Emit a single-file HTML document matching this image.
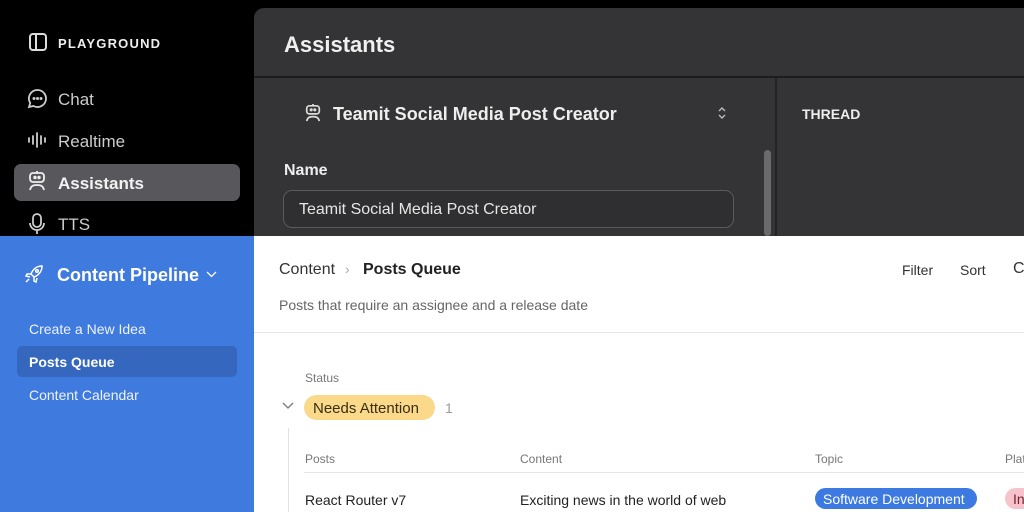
<!DOCTYPE html>
<html><head><meta charset="utf-8"><style>
*{margin:0;padding:0;box-sizing:border-box}
body{width:1024px;height:512px;overflow:hidden;position:relative;font-family:"Liberation Sans",sans-serif;background:#000}
.a{position:absolute;white-space:nowrap}
</style></head><body>
<div class="a" style="left:0;top:0;width:1024px;height:236px;background:#000"></div>
<svg class="a" style="left:28px;top:32px" width="20" height="20" viewBox="0 0 20 20" fill="none" stroke="#ddd" stroke-width="2"><rect x="2" y="2" width="16" height="16" rx="3"/><line x1="8" y1="2" x2="8" y2="18"/></svg>
<div class="a" style="left:58px;top:36px;color:#eee;font-size:13px;font-weight:bold;letter-spacing:1.2px">PLAYGROUND</div>
<svg class="a" style="left:27px;top:88px" width="21" height="21" viewBox="0 0 21 21" fill="none" stroke="#ccc" stroke-width="1.8"><path d="M10.5 2a8.5 8.5 0 1 1-4 16L2 19l1.2-4A8.5 8.5 0 0 1 10.5 2z"/><circle cx="7" cy="10.5" r=".6" fill="#ccc"/><circle cx="10.5" cy="10.5" r=".6" fill="#ccc"/><circle cx="14" cy="10.5" r=".6" fill="#ccc"/></svg>
<div class="a" style="left:58px;top:90px;color:#ccc;font-size:17px">Chat</div>
<svg class="a" style="left:27px;top:132px" width="20" height="16" viewBox="0 0 20 16" stroke="#ccc" stroke-width="1.8" stroke-linecap="round"><line x1="2" y1="6" x2="2" y2="10"/><line x1="6" y1="4" x2="6" y2="12"/><line x1="10" y1="1" x2="10" y2="15"/><line x1="14" y1="4" x2="14" y2="12"/><line x1="18" y1="6" x2="18" y2="10"/></svg>
<div class="a" style="left:58px;top:132px;color:#ccc;font-size:17px">Realtime</div>
<div class="a" style="left:14px;top:164px;width:226px;height:37px;background:#58585c;border-radius:7px"></div>
<svg class="a" style="left:27px;top:170px" width="20" height="22" viewBox="0 0 20 22" fill="none" stroke="#eee" stroke-width="1.8"><rect x="3" y="3" width="14" height="9" rx="3"/><circle cx="8" cy="7.5" r=".8" fill="#eee"/><circle cx="12" cy="7.5" r=".8" fill="#eee"/><path d="M10 1v2M3 20c1-4 3-5 7-5s6 1 7 5"/></svg>
<div class="a" style="left:58px;top:174px;color:#f2f2f2;font-size:17px;font-weight:bold">Assistants</div>
<svg class="a" style="left:28px;top:212px" width="18" height="24" viewBox="0 0 18 24" fill="none" stroke="#ccc" stroke-width="1.8"><rect x="5" y="2" width="8" height="13" rx="4"/><path d="M2 11a7 7 0 0 0 14 0M9 18v4"/></svg>
<div class="a" style="left:58px;top:215px;color:#ccc;font-size:17px">TTS</div>

<div class="a" style="left:254px;top:8px;width:770px;height:228px;background:#343437;border-top-left-radius:10px"></div>
<div class="a" style="left:284px;top:32px;color:#f0f0f0;font-size:22px;font-weight:bold">Assistants</div>
<div class="a" style="left:254px;top:76px;width:770px;height:2px;background:#1c1c1e"></div>
<div class="a" style="left:775px;top:78px;width:2px;height:158px;background:#232325"></div>
<svg class="a" style="left:304px;top:102px" width="18" height="22" viewBox="0 0 20 22" fill="none" stroke="#ddd" stroke-width="1.9"><rect x="3" y="3" width="14" height="9" rx="3"/><circle cx="8" cy="7.5" r=".8" fill="#ddd"/><circle cx="12" cy="7.5" r=".8" fill="#ddd"/><path d="M10 1v2M3 20c1-4 3-5 7-5s6 1 7 5"/></svg>
<div class="a" style="left:333px;top:104px;color:#eee;font-size:18px;font-weight:bold">Teamit Social Media Post Creator</div>
<svg class="a" style="left:717px;top:106px" width="10" height="14" viewBox="0 0 10 14" fill="none" stroke="#bbb" stroke-width="1.4"><path d="M2 5l3-3 3 3M2 9l3 3 3-3"/></svg>
<div class="a" style="left:802px;top:106px;color:#eee;font-size:14px;font-weight:bold">THREAD</div>
<div class="a" style="left:284px;top:162px;color:#eee;font-size:16px;font-weight:bold">Name</div>
<div class="a" style="left:283px;top:190px;width:451px;height:38px;border:1px solid #5a5a5e;border-radius:9px;background:#2f2f32"></div>
<div class="a" style="left:299px;top:201px;color:#e6e6e6;font-size:16px">Teamit Social Media Post Creator</div>
<div class="a" style="left:764px;top:150px;width:7px;height:86px;background:#6a6a6c;border-radius:4px"></div>

<div class="a" style="left:0;top:236px;width:254px;height:276px;background:#3f7ade"></div>
<div class="a" style="left:254px;top:236px;width:770px;height:276px;background:#fff"></div>
<svg class="a" style="left:24px;top:264px" width="20" height="20" viewBox="0 0 20 20" fill="none" stroke="#fff" stroke-width="1.5"><path d="M18 2c-5 0-9 3-11 8l3 3c5-2 8-6 8-11zM7 10l-4 0-1 2 4 1M10 13v4l2 1 1-4M5 15l-3 3"/><circle cx="13" cy="7" r="1.3"/></svg>
<div class="a" style="left:57px;top:265px;color:#fff;font-size:18px;font-weight:bold">Content Pipeline</div>
<svg class="a" style="left:206px;top:271px" width="11" height="7" viewBox="0 0 11 7" fill="none" stroke="#fff" stroke-width="1.3"><path d="M1 1l4.5 4.5L10 1"/></svg>
<div class="a" style="left:29px;top:321px;color:#eef3fc;font-size:14px">Create a New Idea</div>
<div class="a" style="left:17px;top:346px;width:220px;height:31px;background:#3667bf;border-radius:5px"></div>
<div class="a" style="left:29px;top:354px;color:#fff;font-size:14px;font-weight:bold">Posts Queue</div>
<div class="a" style="left:29px;top:387px;color:#eef3fc;font-size:14px">Content Calendar</div>

<div class="a" style="left:279px;top:261px;color:#333;font-size:16px">Content</div>
<div class="a" style="left:345px;top:261px;color:#aaa;font-size:14px">›</div>
<div class="a" style="left:363px;top:261px;color:#222;font-size:16px;font-weight:bold">Posts Queue</div>
<div class="a" style="left:902px;top:262px;color:#333;font-size:14px">Filter</div>
<div class="a" style="left:960px;top:262px;color:#333;font-size:14px">Sort</div>
<div class="a" style="left:1013px;top:260px;color:#333;font-size:16px">C</div>
<div class="a" style="left:279px;top:297px;color:#666;font-size:14px">Posts that require an assignee and a release date</div>
<div class="a" style="left:254px;top:332px;width:770px;height:1px;background:#e6e6e6"></div>
<div class="a" style="left:305px;top:371px;color:#777;font-size:12px">Status</div>
<svg class="a" style="left:282px;top:402px" width="12" height="8" viewBox="0 0 12 8" fill="none" stroke="#777" stroke-width="1.3"><path d="M1 1l5 5 5-5"/></svg>
<div class="a" style="left:304px;top:395px;width:131px;height:25px;background:#fbd98a;border-radius:13px"></div>
<div class="a" style="left:313px;top:400px;color:#3a2e10;font-size:15px">Needs Attention</div>
<div class="a" style="left:445px;top:400px;color:#999;font-size:14px">1</div>
<div class="a" style="left:288px;top:428px;width:1px;height:84px;background:#e2e2e2"></div>
<div class="a" style="left:305px;top:452px;color:#777;font-size:12px">Posts</div>
<div class="a" style="left:520px;top:452px;color:#777;font-size:12px">Content</div>
<div class="a" style="left:815px;top:452px;color:#777;font-size:12px">Topic</div>
<div class="a" style="left:1005px;top:452px;color:#777;font-size:12px">Plat</div>
<div class="a" style="left:304px;top:472px;width:720px;height:1px;background:#e6e6e6"></div>
<div class="a" style="left:305px;top:492px;color:#222;font-size:14px">React Router v7</div>
<div class="a" style="left:520px;top:492px;color:#222;font-size:14px">Exciting news in the world of web</div>
<div class="a" style="left:815px;top:488px;width:162px;height:21px;background:#3c79e0;border-radius:11px"></div>
<div class="a" style="left:823px;top:491px;color:#fff;font-size:14px">Software Development</div>
<div class="a" style="left:1005px;top:488px;width:30px;height:21px;background:#f6c3cc;border-radius:11px"></div>
<div class="a" style="left:1013px;top:491px;color:#7a2030;font-size:14px">In</div>
</body></html>
